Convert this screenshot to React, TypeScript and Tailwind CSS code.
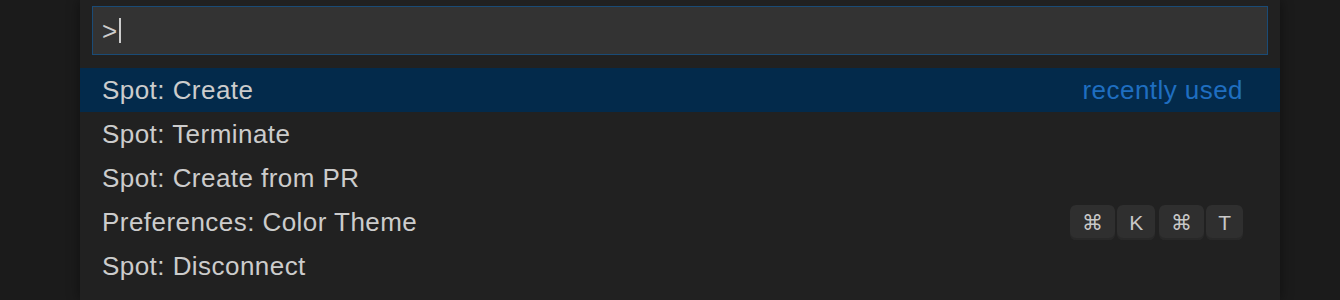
import React from "react";

const rows: { label: string; right?: "recent" | "keys"; selected?: boolean }[] = [
  { label: "Spot: Create", right: "recent", selected: true },
  { label: "Spot: Terminate" },
  { label: "Spot: Create from PR" },
  { label: "Preferences: Color Theme", right: "keys" },
  { label: "Spot: Disconnect" },
];

function Key({ children }: { children: React.ReactNode }) {
  return (
    <span className="flex h-[35px] items-center justify-center rounded-[6px] bg-[#2f2f2f] px-[12px] text-[21px] leading-none text-[#c8c8c8] shadow-[inset_0_-2px_0_#282828]">
      {children}
    </span>
  );
}

export default function App() {
  return (
    <div
      className="flex h-[300px] w-[1340px] overflow-hidden bg-[#1b1b1b] pl-[80px]"
      style={{ fontFamily: '"Liberation Sans", Arial, sans-serif' }}
    >
      <div className="flex h-full w-[1200px] flex-col bg-[#212121] pt-[6px] shadow-[0_0_12px_rgba(0,0,0,0.45)]">
        <div className="px-[12px]">
          <div className="flex h-[49px] items-center border-[1.5px] border-[#1a4b76] bg-[#333333] pl-[9px]">
            <span className="text-[26px] leading-none text-[#cccccc]">&gt;</span>
            <span className="ml-[2px] h-[25px] w-[1.5px] bg-[#cccccc]" />
          </div>
        </div>
        <div className="mt-[13px] flex flex-col">
          {rows.map((r) => (
            <div
              key={r.label}
              className={`flex h-[44px] items-center justify-between pl-[22px] pr-[37px] ${
                r.selected ? "bg-[#032a4b]" : ""
              }`}
            >
              <span className="text-[26px] leading-none tracking-[0.45px] text-[#cccccc]">
                {r.label}
              </span>
              {r.right === "recent" && (
                <span className="text-[26px] leading-none tracking-[0.45px] text-[#1f6ec0]">
                  recently used
                </span>
              )}
              {r.right === "keys" && (
                <span className="flex items-center gap-[4px]">
                  <span className="flex gap-[2px]">
                    <Key>⌘</Key>
                    <Key>K</Key>
                  </span>
                  <span className="flex gap-[2px]">
                    <Key>⌘</Key>
                    <Key>T</Key>
                  </span>
                </span>
              )}
            </div>
          ))}
        </div>
      </div>
    </div>
  );
}
